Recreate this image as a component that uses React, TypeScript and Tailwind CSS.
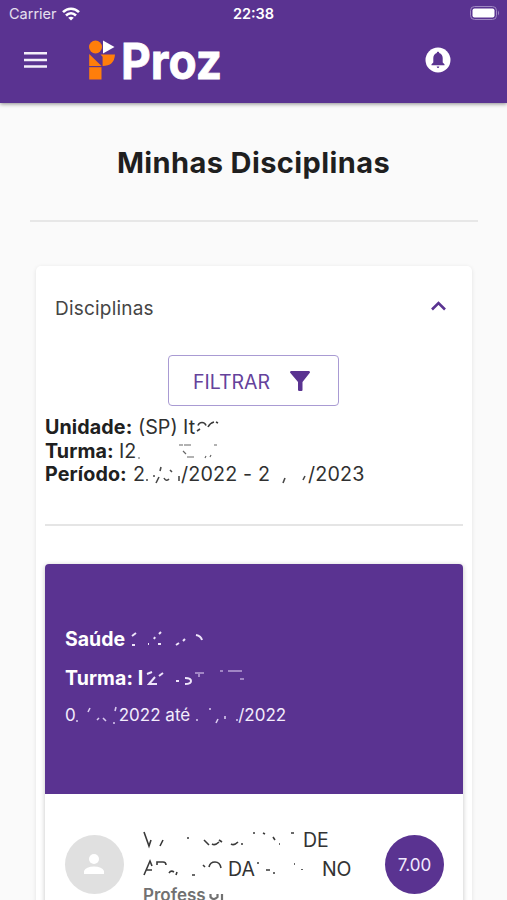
import React from "react";

type MarksProps = { d: string; color: string; width?: number };

/* Leftover strokes of the partly erased text, laid over a line. */
function Marks({ d, color, width = 1.6 }: MarksProps) {
  return (
    <svg className="absolute left-0 top-0 overflow-visible" width="1" height="1" fill="none" stroke={color} strokeWidth={width}>
      <path d={d} />
    </svg>
  );
}

function StatusBar() {
  return (
    <div className="grid h-7 grid-cols-3 items-center pl-[9px] pr-[7px]">
      <div className="flex items-center gap-[6px] text-[14.5px] text-white/85">
        <span className="w-[47px] whitespace-nowrap">Carrier</span>
        <svg width="18" height="14" viewBox="0 0 18 14" fill="none" stroke="white" strokeWidth="2.6">
          <path d="M1 5.2C5.5.6 12.5.6 17 5.2M4 8.5c3-2.9 7-2.9 10 0" />
          <path d="M9 13.5 6.2 10.7q2.8-2.1 5.6 0Z" fill="white" stroke="none" />
        </svg>
      </div>
      <div className="pr-[2px] text-center text-[14.5px] font-semibold text-white">22:38</div>
      <svg className="-mt-[2px] justify-self-end" width="30" height="14" viewBox="0 0 30 14">
        <rect x=".5" y=".5" width="26" height="13" rx="4" fill="none" stroke="#9f88c2" />
        <rect x="2.5" y="2.5" width="22" height="9" rx="2" fill="white" />
        <path d="M28 4.500q2 2.500 0 5Z" fill="#9f88c2" />
      </svg>
    </div>
  );
}

function Logo() {
  return (
    <svg className="overflow-visible" width="136" height="46" viewBox="0 0 136 46">
      <circle cx="9.5" cy="10" r="6.5" fill="#ff7e0b" />
      <path d="M17 3.500v13l11.500-6.500Z" fill="white" />
      <path d="M3.200 17 15.500 29H3.200Z" fill="#ff7e0b" />
      <path d="M3.200 30.200h12.300V42.500H3.200Z" fill="#ff7e0b" />
      <path d="M14.500 17.500h14.500q-.7 11.500-12.400 11.500v-9.300Z" fill="#ff7e0b" />
      <text x="35" y="42" fill="white" stroke="white" strokeWidth=".8" fontSize="49" fontWeight="700" textLength="101" lengthAdjust="spacingAndGlyphs" className="font-['Inter',sans-serif]">Proz</text>
    </svg>
  );
}

function Header() {
  return (
    <header className="h-[103px] shrink-0 bg-[#5a3391] shadow-[0_1px_4px_rgba(0,0,0,0.45)]">
      <StatusBar />
      <div className="flex h-[63px] items-center pl-6 pr-14">
        <svg width="23" height="16" viewBox="0 0 23 16" fill="#f4effa">
          <path d="M0 0h23v2.500H0zM0 6.700h23v2.500H0zM0 13.200h23v2.500H0z" />
        </svg>
        <div className="ml-[39px]"><Logo /></div>
        <svg className="ml-auto" width="26" height="26" viewBox="0 0 26 26">
          <circle cx="13" cy="13" r="12.5" fill="white" />
          <path d="M13 4.800c-.8 0-1.200.5-1.200 1.100C9.400 6.500 8.300 8.600 8.300 11v4.500L6.500 17.300v1h13v-1l-1.800-1.800V11c0-2.400-1.100-4.500-3.500-5.100 0-.6-.4-1.100-1.200-1.100Z" fill="#5a3391" />
          <path d="M11.700 19.400h2.600q-.2 1.600-1.300 1.600t-1.300-1.600Z" fill="#5a3391" />
        </svg>
      </div>
    </header>
  );
}

function Info() {
  return (
    <div className="mt-[10px] whitespace-pre text-[19.7px] leading-[23.5px] text-[#303030]">
      <div className="relative flex">
        <b className="w-[93px] font-bold tracking-[0.1px] text-[#202020]">Unidade:</b>
        <span>(SP) It</span>
        <Marks color="#3a3a3a" d="M153 9.500q1-3 4-3t4 3M152 15l3-2M163 11q2-4 6-5M171 6l2 1" />
      </div>
      <div className="relative flex">
        <b className="w-[74px] font-bold tracking-[0.1px] text-[#202020]">Turma:</b>
        <span>I2</span>
        <Marks color="#666" width={1.2} d="M93 18h2M134 5h4M139 5h7M138 11l3 3M142 17h7M160 18l1-2M165 17l1-2M169 5h3" />
      </div>
      <div className="relative flex">
        <b className="w-[88px] font-bold tracking-[0.1px] text-[#202020]">Período:</b>
        <span>2</span>
        <span className="ml-[36px] tracking-[0.15px]">/2022 - 2</span>
        <span className="ml-[38px] tracking-[0.15px]">/2023</span>
        <Marks color="#4a4a4a" d="M101 17h2M108 13h2M111 20l3-6M115 8l1-4M119 15q2 4 5 1M125 7l2 2M134 13v5M238 20l2-5M258 17l2-4" />
      </div>
    </div>
  );
}

function Teacher() {
  return (
    <div className="flex px-5 pt-[32px]">
      <div className="mt-[9px] grid size-[59px] shrink-0 place-items-center rounded-full bg-[#e0e0e0]">
        <svg className="-ml-[1px]" width="20" height="20" viewBox="0 0 20 20" fill="white">
          <circle cx="10" cy="5" r="5" />
          <path d="M0 20v-3q2-4.500 10-4.500T20 17v3Z" />
        </svg>
      </div>
      <div className="ml-[19px] w-[242px] shrink-0 whitespace-pre text-[19.5px] leading-[29px] text-[#333]">
        <div className="relative flex h-[29px] pl-[160px]">
          <span>DE</span>
          <Marks color="#3a3a3a" d="M1 6l5 14 2-6M17 20l3-6M44 12h2M61 14l5 5M69 18q3 2 7-2M76 14l3 2M88 18q3 2 7-2M98 18h2M110 7h2M120 7l2 1M130 11l2 3M136 18h1M148 7h3" />
        </div>
        <div className="relative flex h-[29px] pl-[85px]">
          <span>DA</span>
          <span className="ml-[67px]">NO</span>
          <Marks color="#3a3a3a" d="M1 20l6-14 2 5M3 15h6M14 10V7h6q3 0 3 3M26 18q2-3 5-1M33 20l1-3M49 20h3M60 10l2 2M66 12q1-5 6-5t6 6M114 8h2M123 15h4M130 18h2M151 9h1M159 14v1" />
        </div>
        <div className="relative -mt-[3px] text-[17px] font-semibold leading-[29px] text-[#717171]">
          Profess
          <Marks color="#717171" width={2.2} d="M67.500 13v3q3 4 7 0v-3M79 13v6" />
        </div>
      </div>
      <div className="mt-[9px] grid size-[59px] shrink-0 place-items-center rounded-full bg-[#5a3391] pt-[4px] text-[17px] text-[#f1eaff]">7.00</div>
    </div>
  );
}

function Course() {
  return (
    <section className="mt-[38px] h-[400px] rounded-[4px] bg-white shadow-[0_1px_5px_rgba(0,0,0,0.24)]">
      <div className="h-[230px] whitespace-pre rounded-t-[4px] bg-[#5a3391] px-5 pt-[61px] text-white">
        <div className="relative h-[28px] text-[19.5px] font-bold leading-[28px]">
          Saúde
          <Marks color="#eee5fa" width={2} d="M67 11l4-3M67 20h3M83 19h1M89 14l1-2M93 19h3M94 9l2-2M111 20l3-2M118 16l2-2M131 10q5 1 6 5" />
        </div>
        <div className="relative mt-[11px] h-[28px] text-[19.5px] font-bold leading-[28px] tracking-[0.1px]">
          Turma: I
          <Marks color="#eee5fa" width={2} d="M82 10l5-2M90 13l-6 7h8M94 12l4-3M111 17h3M120 14q6 0 6 3t-6 3" />
          <Marks color="#b9a2d6" d="M130 9h9M134 10v3M155 7h3M163 7h14M175 15h4" />
        </div>
        <div className="relative mt-[11px] flex h-6 text-[17px] leading-6 text-[#f3ecfc]">
          <span>0</span>
          <span className="ml-[43px]">2022 até</span>
          <span className="ml-[48px]">/2022</span>
          <Marks color="#d9caef" d="M11 18h2M23 9l2-4M32 17l2-2M38 15l3 3M48 20h2M50 8l1-4M131 17h2M144 6h2M151 20l2-4M160 13v3M171 17h2" />
        </div>
      </div>
      <Teacher />
    </section>
  );
}

export default function App() {
  return (
    <div className="flex h-[900px] w-[507px] flex-col overflow-hidden bg-[#fafafa] font-['Inter',sans-serif]">
      <Header />
      <main className="px-[30px]">
        <h1 className="mt-10 text-center text-[29px] font-bold leading-10 tracking-[0.4px] text-[#1f1f1f]">Minhas Disciplinas</h1>
        <div className="mt-[37px] h-[2px] w-[448px] bg-[#e7e7e7]" />
        <div className="ml-[6px] mt-[44px] h-[680px] w-[436px] rounded-[5px] bg-white px-[9px] shadow-[0_1px_4px_rgba(0,0,0,0.1)]">
          <div className="flex h-[84px] items-center justify-between pl-[10px] pr-[17px] text-[19px] text-[#454545]">
            <span className="pt-[2px] tracking-[0.2px]">Disciplinas</span>
            <svg className="mb-[4px]" width="15" height="10" viewBox="0 0 15 10" fill="none" stroke="#5a3391" strokeWidth="2.6">
              <path d="m1 8.500 6.500-6.500L14 8.500" />
            </svg>
          </div>
          <button className="ml-[123px] mt-[5px] flex h-[51px] w-[171px] items-center rounded-[4px] border border-solid border-[#a99bd3] pl-6 text-[19.5px] text-[#65429b]">
            <span className="w-[97px] pt-[4px] text-left">FILTRAR</span>
            <svg width="20" height="20" viewBox="0 0 20 20" fill="#5a3391">
              <path d="M1 0h18q1 0 1 1.500L12.500 11v8q0 1-1 1h-2q-1.500 0-1.500-1v-8L0 1.500Q0 0 1 0Z" />
            </svg>
          </button>
          <Info />
          <div className="mt-[37px] h-[2px] bg-[#e5e5e5]" />
          <Course />
        </div>
      </main>
    </div>
  );
}
